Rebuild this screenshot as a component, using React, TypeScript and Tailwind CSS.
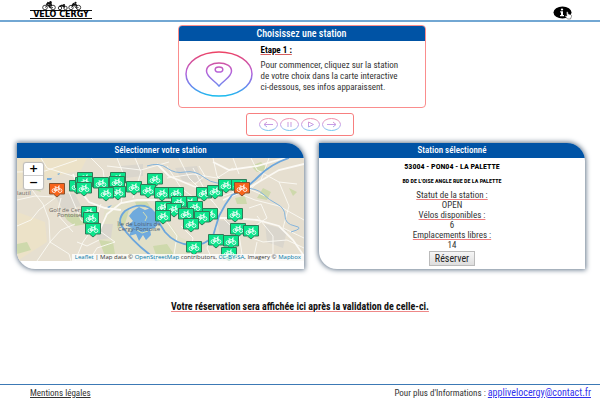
import React from "react";
import type { ReactNode } from "react";

type Station = { x: number; y: number; full?: boolean };

const stations: Station[] = [
  { x: 68, y: 14 }, { x: 60, y: 22 }, { x: 66, y: 19 }, { x: 68, y: 18 }, { x: 67, y: 24 },
  { x: 40, y: 25, full: true },
  { x: 101, y: 14 }, { x: 84, y: 19 }, { x: 100, y: 18 }, { x: 101, y: 28 }, { x: 89, y: 29 },
  { x: 117, y: 23 }, { x: 138, y: 15 }, { x: 131, y: 26 }, { x: 145, y: 29 }, { x: 159, y: 29 },
  { x: 187, y: 29 }, { x: 198, y: 27 }, { x: 209, y: 21 }, { x: 222, y: 21 }, { x: 225, y: 24, full: true },
  { x: 173, y: 38 }, { x: 162, y: 38 }, { x: 178, y: 43 }, { x: 146, y: 43 }, { x: 157, y: 45 },
  { x: 146, y: 52 }, { x: 169, y: 50 }, { x: 193, y: 50 }, { x: 185, y: 53 }, { x: 174, y: 60 },
  { x: 218, y: 50 }, { x: 221, y: 65 }, { x: 234, y: 67 },
  { x: 72, y: 48 }, { x: 74, y: 54 }, { x: 76, y: 65 },
  { x: 199, y: 76 }, { x: 214, y: 77 }, { x: 177, y: 83 }, { x: 212, y: 89 },
];

const minorRoads = [
  "M24 0 L30 10 L56 18", "M0 14 L28 13 L60 2", "M12 28 L26 46 L32 62 L33 84 L20 103",
  "M33 84 L44 72 L58 66", "M33 84 L52 96 L54 103", "M0 68 L14 62 L22 52 L38 40",
  "M0 42 L18 38 L38 39", "M44 40 L40 56 L56 74", "M52 34 L64 62 L84 74 L98 84",
  "M74 0 L86 12 L90 40", "M100 0 L108 20 L104 46", "M118 0 L124 14 L116 40",
  "M90 8 L124 12 L152 4", "M150 8 L164 30 L180 42", "M162 0 L172 20 L196 44",
  "M176 10 L190 36 L204 54", "M150 20 L176 16 L200 20 L216 10", "M196 0 L200 18 L216 34",
  "M216 0 L222 16", "M234 0 L240 12 L262 24 L280 26", "M252 0 L244 22 L230 34",
  "M218 34 L238 42 L262 48 L287 62", "M206 60 L222 76 L226 103", "M224 76 L246 84 L270 82 L287 90",
  "M200 68 L190 90 L196 103", "M240 58 L256 78 L256 103", "M98 84 L80 90 L72 103",
  "M150 64 L160 78 L156 103", "M164 68 L176 80 L172 103", "M84 46 L76 70 L66 84 L58 103",
  "M262 24 L272 48 L266 70 L287 80", "M206 38 L230 30 L248 38", "M60 84 L70 88 L82 82",
  "M232 50 L244 46 L250 60 L238 68", "M182 8 L188 18 L178 26", "M240 84 L236 103",
];

const majorRoads = [
  "M56 16 L64 34 L72 44 L88 50 L104 52",
  "M82 74 L90 56 L104 45 L120 42 L140 42",
  "M160 56 L186 60 L214 60 L240 62 L262 68 L276 82 L287 98",
  "M140 6 L152 18 L176 28 L206 38",
  "M287 6 L262 12 L228 32 L206 42",
  "M196 4 L212 12 L240 8 L268 0",
];

function Bike() {
  return (
    <g fill="none" stroke="#fff" strokeWidth="0.800">
      <circle cx="-3" cy="7.600" r="1.900" />
      <circle cx="3" cy="7.600" r="1.900" />
      <path d="M-3 7.600 L-1.500 4.600 L2 4.600 L0 7.600 Z M-1.500 4.600 L0 7.600 M3 7.600 L1.400 3 L3 3 M-2.500 3.800 H-.6" />
    </g>
  );
}

function Marker({ x, y, full }: Station) {
  return (
    <g transform={`translate(${x} ${y})`}>
      <path
        d="M-7.500 .5 H7.500 V11 H3.500 L0 14 L-3.500 11 H-7.500 Z"
        fill={full ? "#f8641b" : "#0ae58c"}
        stroke={full ? "#87522f" : "#307b58"}
      />
      <Bike />
    </g>
  );
}

function StationMap() {
  return (
    <svg
      viewBox="0 0 287 103"
      preserveAspectRatio="xMidYMid slice"
      className="block h-full w-full"
      role="img"
      aria-label="Carte des stations"
    >
      <rect width="287" height="103" fill="#e6dfd0" />
      <path d="M0 0 H70 L64 12 L30 20 L0 32 Z M0 54 L28 64 L30 84 L0 103 Z" fill="#ece2c8" />
      <path d="M88 50 L110 42 L132 42 L150 62 L164 80 L190 88 L160 103 L96 103 L82 84 Z" fill="#e2e0c8" />
      <g fill="#ced9ac">
        <path d="M46 56 L62 56 L70 66 L58 68 L50 62 Z M8 20 L20 24 L24 34 L12 30 Z M82 82 L96 84 L98 96 L88 98 Z" />
        <path d="M104 56 L112 52 L108 66 L100 70 Z M0 86 L10 84 L14 92 L0 96 Z M218 40 L228 38 L230 46 L220 46 Z M118 44 L130 44 L134 50 L120 49 Z" />
        <path d="M228 68 L240 78 L230 80 Z M246 30 L254 34 L250 42 L240 40 Z M234 8 L244 4 L252 12 L240 14 Z M136 88 L150 86 L158 98 L140 100 Z M272 30 L280 34 L276 38 Z" />
      </g>
      <g fill="#dad6cd">
        <path d="M36 34 L58 36 L64 48 L46 52 Z M78 66 L96 66 L94 80 L80 82 Z M158 10 L180 8 L186 24 L166 24 Z" />
        <path d="M200 62 L224 64 L220 84 L204 82 Z M248 66 L270 72 L266 90 L250 84 Z M104 8 L126 6 L126 18 L108 20 Z" />
      </g>
      <g fill="none" stroke="#fbf9f4">
        {minorRoads.map((d) => (
          <path key={d} d={d} strokeWidth="0.900" />
        ))}
        {majorRoads.map((d) => (
          <path key={d} d={d} strokeWidth="1.800" />
        ))}
      </g>
      <g fill="none" stroke="#84b4dc" strokeLinejoin="round">
        <path d="M130 8 Q142 4 150 10 T168 14 T188 20 T216 24" strokeWidth="1" />
        <path d="M226 30 Q240 30 246 36 T260 46 T268 58 T278 68 T274 74" strokeWidth="1" />
        <path
          d="M272 0 Q254 6 242 18 Q228 32 215 37 Q208 46 202 58 L196 78 Q188 88 174 87 Q158 86 148 74 L139 60 Q136 50 128 48 Q118 46 108 53 Q101 60 104 67 Q114 82 132 96 L140 103"
          stroke="#6ca6dc"
          strokeWidth="1.800"
        />
      </g>
      <path d="M116 53 L122 49 L128 52 L134 50 L139 55 L142 64 L138 70 L133 71 L134 77 L129 82 L126 77 L122 83 L119 76 L112 78 L115 70 L110 68 L116 63 L112 58 Z" fill="#6faadd" />
      <path d="M30 20 L35 20 L34 22 L30 22 Z M90 49 L95 47 L92 50 Z M40 16 L43 15 L42 17 Z" fill="#6faadd" />
      <path d="M126 54 L130 59 L128 63 M120 72 L125 75 L131 73" fill="none" stroke="#d3dfb4" />
      <g className="fill-[#6e6a66] font-['Open_Sans','Noto_Sans',sans-serif] text-[6px] font-medium">
        <text x="0" y="37">lautil</text>
        <text x="32" y="54">Golf de Cergy-</text>
        <text x="40" y="59">Pontoise</text>
      </g>
      <g textAnchor="middle" className="fill-[#4d5f73] font-['Open_Sans','Noto_Sans',sans-serif] text-[6px] font-medium">
        <text x="122" y="68">Île de Loisirs de</text>
        <text x="122" y="73">Cergy-Pontoise</text>
      </g>
      {stations.map((s) => (
        <Marker key={`${s.x}-${s.y}`} {...s} />
      ))}
    </svg>
  );
}

function Logo() {
  return (
    <a href="#accueil" aria-label="Velo Cergy" className="flex w-[62px] flex-col pt-px text-black">
      <svg viewBox="0 0 62 9" className="block h-[9px] w-[62px]" fill="none" stroke="#111">
        <g strokeWidth="0.800">
          <circle cx="15" cy="6.500" r="2.300" />
          <circle cx="23" cy="6.500" r="2.300" />
          <circle cx="30" cy="7" r="1.700" />
          <circle cx="35.500" cy="7" r="1.700" />
          <circle cx="41" cy="6.500" r="2.200" />
          <circle cx="48.500" cy="6.500" r="2.200" />
          <path d="M15 6.500 L18 4 L21 7 L23 6.500 M41 6.500 L44 4 L46 7 L48.500 6.500" />
        </g>
        <path d="M16.500 4 L18 1.800 L21 3 L21 5 M18.500 3.500 L20 6.500 M29.500 5.500 L32 4.500 L35 6 M42 5 L43.500 2.800 L46 4 L47 5" strokeWidth="1.800" />
        <circle cx="20.500" cy="1.300" r="1.200" fill="#111" stroke="none" />
        <circle cx="34" cy="4" r="1.100" fill="#111" stroke="none" />
        <circle cx="45.500" cy="1.800" r="1.100" fill="#111" stroke="none" />
      </svg>
      <svg viewBox="0 0 62 9" className="block h-[9px] w-[62px]">
        <path d="M0 .5 H62 M0 8.500 H62" stroke="#111" />
        <text x="31" y="7" textAnchor="middle" className="fill-black font-['DejaVu_Sans',sans-serif] text-[8px] font-bold">
          VELO CERGY
        </text>
      </svg>
    </a>
  );
}

function InfoButton() {
  return (
    <button type="button" aria-label="Informations" className="cursor-pointer">
      <svg viewBox="0 0 20 14" className="block h-[14px] w-[20px]">
        <ellipse cx="9.500" cy="6.500" rx="9" ry="6" fill="#000" />
        <path d="M7.200 5.300 H10 V9 H11 V10.200 H7 V9 H8 V6.500 H7.200 Z" fill="#fff" />
        <ellipse cx="9" cy="3.500" rx="1.200" ry="1" fill="#fff" />
        <path d="M13.500 6 Q14.500 5.200 15 6.200 L15.300 8 L18 8.800 Q18.800 9.200 18.500 10.500 L17.500 13 H14.500 L12 10.200 Q12 9.200 13.800 10 Z" fill="#fff" stroke="#333" strokeWidth="0.500" />
      </svg>
    </button>
  );
}

function ControlButton({ label, children }: { label: string; children: ReactNode }) {
  return (
    <button type="button" aria-label={label} className="cursor-pointer">
      <svg viewBox="0 0 19 13" className="block h-[13px] w-[19px]" fill="none" stroke="url(#soft)">
        <ellipse cx="9.500" cy="6.500" rx="9" ry="6" />
        {children}
      </svg>
    </button>
  );
}

function PanelTitle({ children }: { children: ReactNode }) {
  return (
    <h2 className="bg-[#0053a5] text-center text-[9px] leading-[15px] font-medium text-white">{children}</h2>
  );
}

function Fact({ label, value }: { label: string; value: string }) {
  return (
    <div>
      <dt className="underline decoration-[#f07f80] underline-offset-1">{label}</dt>
      <dd>{value}</dd>
    </div>
  );
}

export default function App() {
  return (
    <div className="flex min-h-screen flex-col bg-white font-['Roboto_Condensed',Roboto,sans-serif] text-[#333]">
      <svg className="absolute h-0 w-0" aria-hidden="true">
        <defs>
          <linearGradient id="vivid" gradientUnits="userSpaceOnUse" x1="0" y1="0" x2="0" y2="46">
            <stop offset="0" stopColor="#f0415f" />
            <stop offset="0.450" stopColor="#b862d8" />
            <stop offset="0.750" stopColor="#6f86ee" />
            <stop offset="1" stopColor="#12c0ee" />
          </linearGradient>
          <linearGradient id="soft" gradientUnits="userSpaceOnUse" x1="0" y1="0" x2="0" y2="13">
            <stop offset="0" stopColor="#f58fa4" />
            <stop offset="0.500" stopColor="#c69be6" />
            <stop offset="1" stopColor="#6dcdf0" />
          </linearGradient>
        </defs>
      </svg>

      <header className="flex h-[22px] items-start justify-between border-b-2 border-[#72a7d3] pr-[27px] pl-[30px]">
        <Logo />
        <div className="pt-[3px]">
          <InfoButton />
        </div>
      </header>

      <main className="flex grow flex-col">
        <div className="pl-[3px]">
          <section className="mx-auto mt-[3px] w-[248px] overflow-hidden rounded-[4px] border border-[#fa8d8d]">
            <h1 className="bg-[#0053a5] text-center text-[10px] leading-[15px] font-medium text-white">
              Choisissez une station
            </h1>
            <div className="flex gap-2 pt-1 pb-[10px] pl-[6px]">
              <svg viewBox="0 0 68 46" className="mt-[6px] h-[46px] w-[68px] shrink-0" fill="none" stroke="url(#vivid)" strokeWidth="1.500">
                <ellipse cx="34" cy="23" rx="33" ry="22" />
                <path d="M34 35 C29 29 21.500 26 21.500 20 C21.500 15 27 12 34 12 C41 12 46.500 15 46.500 20 C46.500 26 39 29 34 35 Z" />
                <ellipse cx="34" cy="18.500" rx="3.800" ry="2.600" />
              </svg>
              <div className="text-[9px] leading-[11px]">
                <h3 className="font-bold text-black underline decoration-[#d66060] underline-offset-1">Etape 1 :</h3>
                <p className="mt-1 w-[144px]">
                  Pour commencer, cliquez sur la station de votre choix dans la carte interactive ci-dessous, ses infos apparaissent.
                </p>
              </div>
            </div>
          </section>
        </div>

        <div className="mx-auto mt-[5px] flex h-[23px] w-[108px] items-center justify-center gap-[2px] rounded-[3px] border border-[#f77f7f]">
          <ControlButton label="Précédent">
            <path d="M14 6.500 H5 M8 4 L5 6.500 L8 9" />
          </ControlButton>
          <ControlButton label="Pause">
            <path d="M8 4 V9 M11 4 V9" />
          </ControlButton>
          <ControlButton label="Lecture">
            <path d="M7.500 4 L12.500 6.500 L7.500 9 Z" />
          </ControlButton>
          <ControlButton label="Suivant">
            <path d="M5 6.500 H14 M11 4 L14 6.500 L11 9" />
          </ControlButton>
        </div>

        <div className="mt-[7px] grid grid-cols-[287fr_266fr] gap-[15px] pr-[15px] pl-[17px]">
          <section className="overflow-hidden rounded-tr-[18px] rounded-bl-[18px] pb-2 shadow-[0_0_5px_1px_#66788c]">
            <PanelTitle>Sélectionner votre station</PanelTitle>
            <div className="relative h-[103px]">
              <StationMap />
              <div className="absolute top-[5px] left-[7px] flex w-[19px] flex-col divide-y divide-[#ccc] rounded-[2px] bg-white font-['DejaVu_Sans',sans-serif] text-[11px] font-bold text-black shadow-[0_0_1px_1px_#bbb]">
                <button type="button" aria-label="Zoom avant" className="h-[13px] leading-[12px]">+</button>
                <button type="button" aria-label="Zoom arrière" className="h-[13px] leading-[11px]">−</button>
              </div>
              <div className="absolute right-0 bottom-0 bg-white/80 px-[3px] font-['Open_Sans','Noto_Sans',sans-serif] text-[6px] leading-[7px] font-medium whitespace-nowrap">
                <a href="#leaflet" className="text-[#0078a8]">Leaflet</a> | Map data ©{" "}
                <a href="#osm" className="text-[#0078a8]">OpenStreetMap</a> contributors,{" "}
                <a href="#cc" className="text-[#0078a8]">CC-BY-SA</a>, Imagery ©{" "}
                <a href="#mapbox" className="text-[#0078a8]">Mapbox</a>
              </div>
            </div>
          </section>

          <section className="overflow-hidden rounded-tr-[18px] rounded-bl-[18px] text-center shadow-[0_0_5px_1px_#66788c]">
            <PanelTitle>Station sélectionné</PanelTitle>
            <h3 className="mt-1 text-[8px] leading-[10px] font-bold text-black">53004 - PON04 - LA PALETTE</h3>
            <h4 className="mt-1 text-[6px] leading-[10px] font-bold text-black">BD DE L'OISE ANGLE RUE DE LA PALETTE</h4>
            <dl className="mt-1 text-[9px] leading-[10px]">
              <Fact label="Statut de la station :" value="OPEN" />
              <Fact label="Vélos disponibles :" value="6" />
              <Fact label="Emplacements libres :" value="14" />
            </dl>
            <button type="button" className="mx-auto mt-px block h-[15px] w-[46px] border border-[#bbb] bg-linear-to-b from-[#f6f6f6] to-[#dedede] text-[10px] leading-[13px] text-[#222]">
              Réserver
            </button>
          </section>
        </div>

        <p className="mt-8 text-center text-[10px] leading-[12px] font-bold text-[#111]">
          <span className="underline decoration-[#e88] underline-offset-1">
            Votre réservation sera affichée ici après la validation de celle-ci.
          </span>
        </p>
      </main>

      <footer className="flex h-4 items-center justify-between border-t border-[#3c79b5] pr-[9px] pl-[30px] text-[9px] leading-[12px]">
        <a href="#mentions" className="underline">Mentions légales</a>
        <p>
          Pour plus d'Informations :{" "}
          <a href="mailto:applivelocergy@contact.fr" className="text-[10px] text-[#3333ee] underline">applivelocergy@contact.fr</a>
        </p>
      </footer>
    </div>
  );
}
